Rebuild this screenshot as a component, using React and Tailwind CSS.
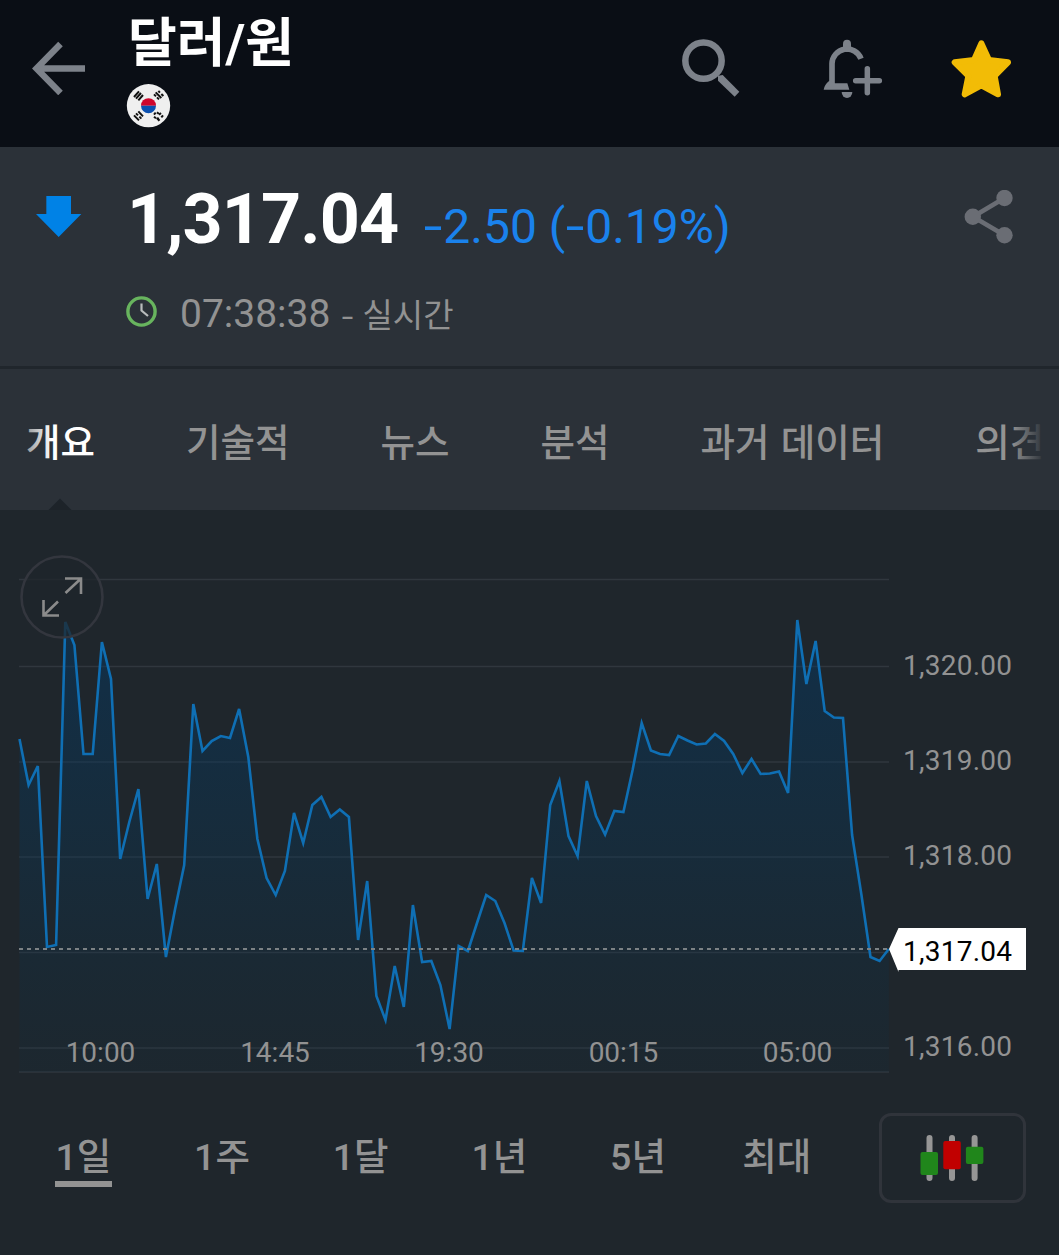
const tabs = ['개요', '기술적', '뉴스', '분석', '과거 데이터', '의견']
const ranges = ['1일', '1주', '1달', '1년', '5년', '최대']

const gridLines = [579.5, 666.5, 762, 857, 952.5, 1048, 1072]

const priceLabels = [
  { label: '1,320.00', y: 675 },
  { label: '1,319.00', y: 770 },
  { label: '1,318.00', y: 865 },
  { label: '1,316.00', y: 1056 }
]

const timeLabels = [
  { label: '10:00', x: 100.5 },
  { label: '14:45', x: 275 },
  { label: '19:30', x: 449 },
  { label: '00:15', x: 623.5 },
  { label: '05:00', x: 797.5 }
]

// one sample every 15 minutes, as chart heights
const series = [
  739, 785, 766, 947, 945, 622, 645, 754, 754, 642, 679, 859, 822, 789, 899, 864,
  957, 909, 865, 704, 751, 741, 736, 738, 709, 757, 839, 878, 895, 871, 813, 843,
  805, 797, 817, 809.5, 817, 940, 881, 996, 1020, 966, 1007, 905, 962, 961, 985, 1029,
  946, 951, 923, 895, 901, 923, 950.5, 951, 878, 903, 805, 781, 836, 856, 781, 816,
  834.5, 811, 812, 770, 723, 750.5, 754, 755, 736, 740.5, 744.5, 743.5, 734, 741, 754, 773,
  759, 774, 773.5, 771.5, 793, 620, 684, 641, 711, 717.5, 718, 835, 894, 957, 961, 949
]

const linePoints = series.map((y, i) => `${(19.5 + i * 9.15).toFixed(1)},${y}`).join(' ')

const BackIcon = () => (
  <svg className="w-[54px] h-[54px]" viewBox="32 41 54 54" fill="none" stroke="#7d828a" strokeWidth="6.4">
    <path d="M85 68.5H36.500M60.5 44L36.500 68.5L60.5 93" />
  </svg>
)

const FlagIcon = () => (
  <svg className="w-[45px] h-[45px] -ml-px" viewBox="378 248 135 135">
    <circle cx="445.500" cy="316" r="65" fill="#efefef" />
    <path d="M423 316a22.500 22.500 0 0 1 45 0z" fill="#d0062d" />
    <path d="M423 316a22.500 22.500 0 0 0 45 0z" fill="#0b50b0" />
    <g stroke="#111" strokeWidth="6" fill="none">
      <path d="M402 290l15-17M408 295l15-17M415 300l14-16" />
      <path d="M462 282l6 6M471 291l6 6M467 276l17 17M475 272l5 5M484 281l6 6" />
      <path d="M402 345l15 15M408 339l6 6M418 349l6 6M415 333l14 15" />
      <path d="M462 343l5-6M471 336l5 4M462 349l6 5M470 357l6-5M477 343l6-5M484 351l5-6M474 361l5-4" />
    </g>
  </svg>
)

const SearchIcon = () => (
  <svg className="w-[60px] h-[60px]" viewBox="63 56 180 180">
    <circle cx="130.500" cy="121" r="54.500" fill="none" stroke="#7d828a" strokeWidth="19.500" />
    <path d="M174 166L188 164L238 214L224 229L174 181Z" fill="#7d828a" />
  </svg>
)

const BellPlusIcon = () => (
  <svg className="w-[60px] h-[60px]" viewBox="489 57 180 180" fill="none" stroke="#7d828a">
    <path d="M561 71V84" strokeWidth="24" strokeLinecap="round" />
    <path d="M516 194V131A45 45 0 0 1 603 116" strokeWidth="17" />
    <path d="M491 209Q493 194 508 182L524 190H562L568 209Z" fill="#7d828a" stroke="none" />
    <path d="M545 216H577A16 18 0 0 1 545 216Z" fill="#7d828a" stroke="none" />
    <path d="M587 182H658M622 146V218" strokeWidth="16.500" strokeLinecap="round" />
  </svg>
)

const StarIcon = () => (
  <svg className="w-[60px] h-[60px]" viewBox="873 56 180 180">
    <path
      d="M964 69L987 119L1044 126L1004 167L1014 222L964 195L914 222L925 167L884 126L942 119Z"
      fill="#f2bc06"
      stroke="#f2bc06"
      strokeWidth="18"
      strokeLinejoin="round"
    />
  </svg>
)

const ClockIcon = () => (
  <svg className="-mt-[3px] -ml-px w-[31px] h-[31px]" viewBox="0 0 31 31" fill="none">
    <circle cx="15.500" cy="15.500" r="13.600" stroke="#68b45e" strokeWidth="3.400" />
    <path d="M15.500 7.500V14.500L22 20" stroke="#b9bcbd" strokeWidth="2.200" />
  </svg>
)

const ShareIcon = () => (
  <svg className="w-[50px] h-[54px]" viewBox="964 190 50 54" fill="#6a6d74">
    <path d="M1004.500 198L973 216.700L1004.500 235.200" fill="none" stroke="#6a6d74" strokeWidth="4.600" />
    <circle cx="1004.500" cy="198" r="8.200" />
    <circle cx="972.800" cy="216.700" r="8.200" />
    <circle cx="1004.500" cy="235.200" r="8.200" />
  </svg>
)

const CandleIcon = () => (
  <svg className="mr-[2px] w-[66px] h-[48px]" viewBox="919 1134 66 48">
    <path d="M929.500 1138V1178M952 1138V1178M974.600 1138V1178" stroke="#969696" strokeWidth="6" strokeLinecap="round" />
    <rect x="920.500" y="1152" width="17.500" height="23" rx="2" fill="#20861b" />
    <rect x="943.300" y="1141" width="17.500" height="28.300" rx="2" fill="#c10000" />
    <rect x="965.900" y="1146.700" width="17.500" height="17.300" rx="2" fill="#20861b" />
  </svg>
)

const Minus = () => <span className="inline-block w-[20px] scale-x-140 text-center">-</span>

const PriceChart = () => (
  <svg className="block w-[1059px] h-[580px]" viewBox="0 510 1059 580">
    <defs>
      <linearGradient id="area" gradientUnits="userSpaceOnUse" x1="0" y1="620" x2="0" y2="1072">
        <stop offset="0" stopColor="#003a6b" stopOpacity="0.45" />
        <stop offset="0.5" stopColor="#023a62" stopOpacity="0.28" />
        <stop offset="1" stopColor="#06324a" stopOpacity="0.1" />
      </linearGradient>
    </defs>
    {gridLines.map((y) => (
      <path key={y} d={`M19 ${y}H889`} stroke="#30373e" strokeWidth="1.500" />
    ))}
    <polygon points={`19.5,1072 ${linePoints} 888.8,1072`} fill="url(#area)" />
    <polyline points={linePoints} fill="none" stroke="#0f6fb4" strokeWidth="2.600" />
    <path d="M19 949H889" stroke="#7c8285" strokeWidth="1.800" strokeDasharray="4 4" />

    {/* Axis labels */}
    <g fill="#929292" fontSize="28">
      {priceLabels.map((item) => (
        <text key={item.label} x="903" y={item.y} textLength="109">{item.label}</text>
      ))}
      {timeLabels.map((item) => (
        <text key={item.label} x={item.x} y="1062" textAnchor="middle">{item.label}</text>
      ))}
    </g>

    {/* Current price flag */}
    <path d="M889 949L898.500 928H1026V970H898.500V972Z" fill="#fff" />
    <text x="903" y="961" fontSize="28" textLength="109" fill="#000">1,317.04</text>

    {/* Expand button */}
    <circle cx="62" cy="597" r="40.500" fill="#1f252b" fillOpacity="0.75" stroke="#33363e" strokeWidth="2.600" />
    <path
      d="M65 578.500H81V594M81 578.500L65.500 593M43.500 600V615.500H59M43.500 615.500L58 601.500"
      fill="none"
      stroke="#8b8b8b"
      strokeWidth="2.600"
    />
  </svg>
)

const Header = () => (
  <header className="flex h-[147px] bg-[#0a0e15] pl-8">
    <div className="w-[95px] pt-[41px]">
      <BackIcon />
    </div>
    <div className="flex-1">
      <h1 className="mt-[11px] ml-px h-[72px] text-[53px] leading-[66px] font-bold text-white whitespace-nowrap">달러/원</h1>
      <FlagIcon />
    </div>
    <div className="flex pt-[39px] pr-[48px]">
      <div className="mr-[82px]">
        <SearchIcon />
      </div>
      <BellPlusIcon />
      <div className="ml-[68px]">
        <StarIcon />
      </div>
    </div>
  </header>
)

const Quote = () => (
  <section className="flex h-[222px] border-b-[3px] border-[#20262c] bg-[#2b3138] pl-9">
    <div className="w-[91px] pt-[49px]">
      <svg className="w-[46px] h-[42px]" viewBox="107 139 138 126" fill="#0082e6">
        <path d="M138 139H212V193H243L175 262L107 193H138Z" />
      </svg>
    </div>
    <div className="flex-1">
      <div className="flex h-[100px] items-baseline pt-[30px] whitespace-nowrap">
        <span className="text-[70px] leading-[84px] font-bold tracking-[-0.9px] text-white">1,317.04</span>
        <span className="ml-[25px] text-[48px] text-[#1a82ec]">
          <Minus />2.50 (<Minus />0.19%)
        </span>
      </div>
      <div className="mt-[42px] flex h-12 items-center text-[#929292]">
        <ClockIcon />
        <div className="ml-[23px] flex items-baseline pt-[3px]">
          <span className="text-[39px] whitespace-pre">07:38:38</span>
          <span className="ml-[11px] w-[13px] scale-x-130 text-center text-[32px]">-</span>
          <span className="ml-[8px] pt-px text-[33px] whitespace-pre">실시간</span>
        </div>
      </div>
    </div>
    <div className="pt-[43px] pr-[45px]">
      <ShareIcon />
    </div>
  </section>
)

const Tabs = () => (
  <nav className="relative flex h-[141px] gap-[91px] overflow-hidden bg-[#2b3138] pt-[47px] pl-[26px]">
    {tabs.map((tab, index) => (
      <button
        key={tab}
        className={`h-[54px] shrink-0 text-[37.5px] leading-[54px] font-medium [word-spacing:2px] whitespace-nowrap ${index === 0 ? 'text-white' : 'text-[#939393]'}`}
      >
        {tab}
      </button>
    ))}
    <div className="absolute inset-y-0 left-0 w-[52px] bg-gradient-to-r from-[#2b3138] to-transparent" />
    <div className="absolute inset-y-0 right-0 w-[48px] bg-gradient-to-l from-[#2b3138] from-30% to-transparent" />
    <svg className="absolute bottom-0 left-[48px] w-6 h-3" viewBox="0 0 24 12">
      <path d="M0.500 12L12 0.500L23.500 12Z" fill="#1d2329" />
    </svg>
  </nav>
)

const RangePicker = () => (
  <div className="flex h-[165px] pt-[23px] pl-[14px]">
    <div className="grid w-[832px] grid-cols-6">
      {ranges.map((range, index) => (
        <div key={range} className="flex items-start justify-center">
          <button
            className={`h-[74px] border-b-[6px] pt-5 text-[37.5px] leading-[48px] font-medium whitespace-nowrap text-[#939393] ${index === 0 ? 'w-[57px] border-[#939393]' : 'border-transparent'}`}
          >
            {range}
          </button>
        </div>
      ))}
    </div>
    <button className="ml-[33px] flex h-[90px] w-[147px] items-center justify-center rounded-xl border-3 border-[#30343b]">
      <CandleIcon />
    </button>
  </div>
)

const App = () => {
  return (
    <div className="h-[1255px] w-[1059px] overflow-hidden bg-[#1f262c] font-['Roboto','Noto_Sans_CJK_KR',sans-serif]">
      <Header />
      <Quote />
      <Tabs />
      <PriceChart />
      <RangePicker />
    </div>
  )
}

export default App
